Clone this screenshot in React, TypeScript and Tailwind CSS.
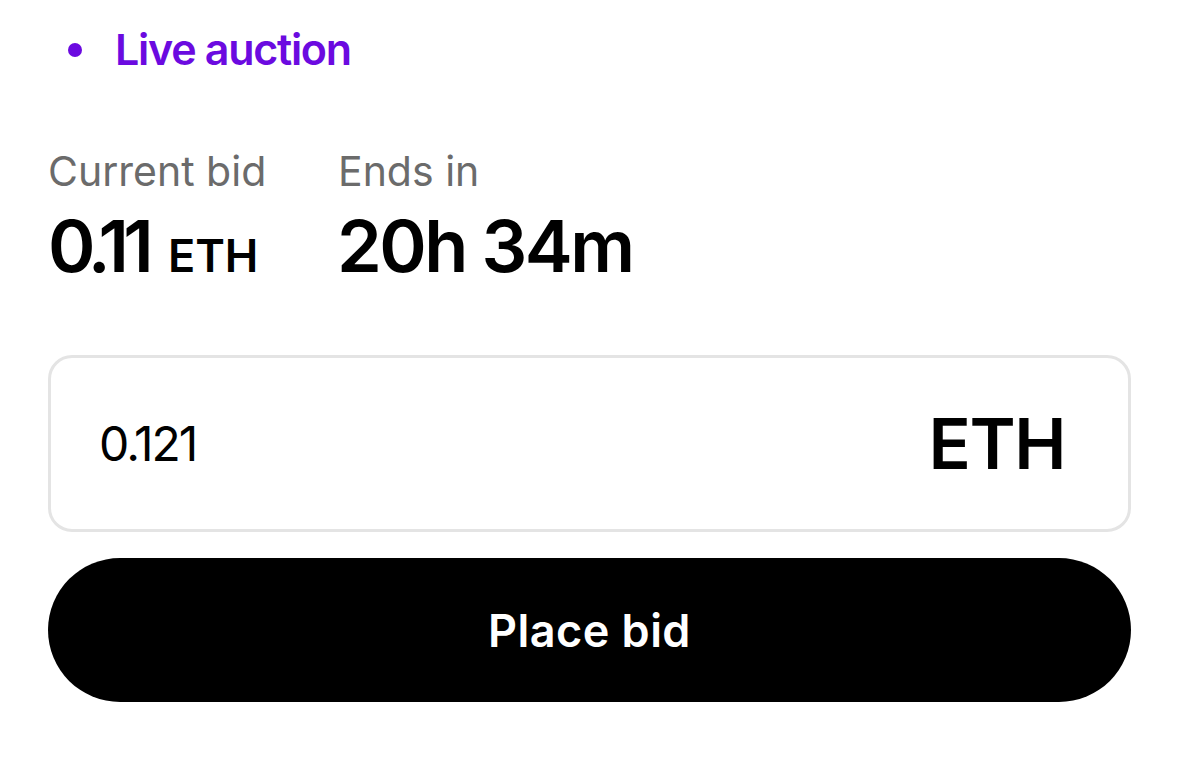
export default function App() {
  return (
    <div className="min-h-[758px] w-full bg-white px-12 pt-[28px] font-['Inter',sans-serif] text-black">
      {/* status */}
      <div className="flex items-center">
        <span className="ml-[20px] h-[14px] w-[14px] rounded-full bg-[#6b0ae0]" />
        <span className="ml-[33px] text-[43px] font-semibold leading-none tracking-[-0.03em] text-[#6b0ae0]">
          Live auction
        </span>
      </div>

      {/* stats */}
      <div className="mt-[80px] flex">
        <div className="flex w-[292px] flex-col">
          <span className="text-[41px] leading-none text-[#6b6b6b]">Current bid</span>
          <div className="mt-[18px] flex items-baseline">
            <span className="text-[72px] font-semibold leading-none tracking-[-0.08em]">0.11</span>
            <span className="ml-[20px] text-[45px] font-semibold leading-none">ETH</span>
          </div>
        </div>
        <div className="flex flex-col">
          <span className="ml-[-2px] text-[41px] leading-none text-[#6b6b6b]">Ends in</span>
          <span className="mt-[18px] ml-[-3px] text-[72px] font-semibold leading-none tracking-[-0.035em]">
            20h 34m
          </span>
        </div>
      </div>

      {/* bid input */}
      <div className="mt-[73px] flex h-[177px] items-center justify-between rounded-[24px] border-[3px] border-[#e4e4e4] pl-[48px] pr-[63px]">
        <span className="text-[48px] leading-none tracking-[-0.04em]">0.121</span>
        <span className="text-[70px] font-semibold leading-none tracking-[-0.02em]">ETH</span>
      </div>

      <button className="mt-[26px] flex h-[144px] w-full items-center justify-center rounded-full bg-black text-[45px] font-semibold leading-none tracking-[0.01em] text-white">
        Place bid
      </button>
    </div>
  );
}
